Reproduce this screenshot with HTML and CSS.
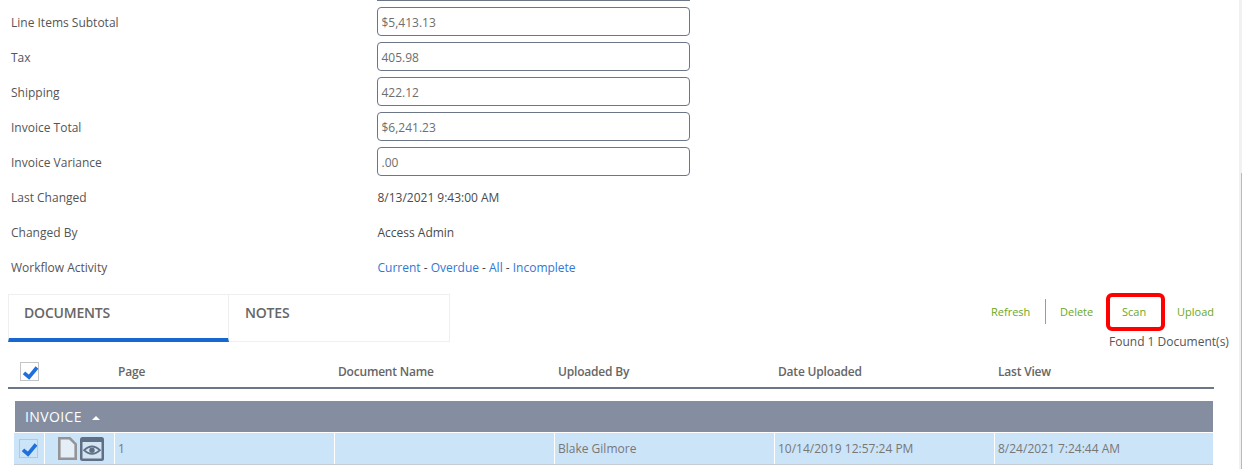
FILE: index.html
```html
<!DOCTYPE html>
<html lang="en">
<head>
<meta charset="utf-8">
<title>Invoice</title>
<link rel="stylesheet" href="styles.css">
</head>
<body>
<div class="page">
  <div class="clipped-field"></div>
  <div class="form">
    <div class="row"><span class="label">Line Items Subtotal</span><div class="input">$5,413.13</div></div>
    <div class="row"><span class="label">Tax</span><div class="input">405.98</div></div>
    <div class="row"><span class="label">Shipping</span><div class="input">422.12</div></div>
    <div class="row"><span class="label">Invoice Total</span><div class="input">$6,241.23</div></div>
    <div class="row"><span class="label">Invoice Variance</span><div class="input">.00</div></div>
    <div class="row"><span class="label">Last Changed</span><span class="value">8/13/2021 9:43:00 AM</span></div>
    <div class="row"><span class="label">Changed By</span><span class="value">Access Admin</span></div>
    <div class="row"><span class="label">Workflow Activity</span><span class="value"><a class="link">Current</a> - <a class="link">Overdue</a> - <a class="link">All</a> - <a class="link">Incomplete</a></span></div>
  </div>
  <div class="tabbar">
    <div class="tabs">
      <div class="tab tab-active">DOCUMENTS</div>
      <div class="tab tab-second">NOTES</div>
    </div>
    <div class="actions">
      <div class="action-row">
        <a class="action action-refresh">Refresh</a>
        <a class="action action-delete">Delete</a>
        <a class="action action-scan">Scan</a>
        <a class="action action-upload">Upload</a>
      </div>
      <div class="found">Found 1 Document(s)</div>
    </div>
  </div>
  <div class="thead">
    <div class="check-cell">
      <span class="check"><svg viewBox="0 0 18 18" width="18" height="18"><path d="M3 9.8 L8 14.2 L16 4.5" fill="none" stroke="#1f6fdc" stroke-width="3.6"/></svg></span>
    </div>
    <div class="th">Page</div>
    <div class="th">Document Name</div>
    <div class="th">Uploaded By</div>
    <div class="th">Date Uploaded</div>
    <div class="th">Last View</div>
  </div>
  <div class="group">INVOICE <span class="caret"></span></div>
  <div class="trow">
    <div class="td td-check">
      <span class="check"><svg viewBox="0 0 18 18" width="18" height="18"><path d="M3 9.8 L8 14.2 L16 4.5" fill="none" stroke="#1f6fdc" stroke-width="3.6"/></svg></span>
    </div>
    <div class="td td-icons">
      <svg class="icon-doc" viewBox="0 0 19 23" width="19" height="23"><path d="M1.3 1.3 H11.8 L17.7 7.2 V21.7 H1.3 Z" fill="#e3eef7" stroke="#949496" stroke-width="2.6"/></svg>
      <svg class="icon-view" viewBox="0 0 24 24" width="24" height="24"><rect x="0" y="0" width="24" height="24" rx="2.5" fill="#5f6f85"/><rect x="2.5" y="5" width="19" height="16.5" fill="#d3e4f2"/><path d="M4 13.2 Q12 5.5 20 13.2 Q12 20.8 4 13.2 Z" fill="none" stroke="#5f6f85" stroke-width="1.6"/><circle cx="12" cy="13.2" r="2.7" fill="#5f6f85"/></svg>
    </div>
    <div class="td td-wide">1</div>
    <div class="td td-wide"></div>
    <div class="td td-wide">Blake Gilmore</div>
    <div class="td td-wide">10/14/2019 12:57:24 PM</div>
    <div class="td td-last">8/24/2021 7:24:44 AM</div>
  </div>
</div>
<div class="scroll-track"><div class="scroll-thumb"></div></div>
</body>
</html>
```

FILE: styles.css
```css
*, *::after { box-sizing: border-box; }
html, body { margin: 0; height: 469px; overflow: hidden; background: #fff; }
body { font-family: "Open Sans", sans-serif; font-size: 12px; color: #555; }
.page { width: 1239px; padding-left: 8px; }
.clipped-field { margin-left: 369px; width: 313px; height: 1px; background: #6b7686; }
.form { padding-top: 4px; }
.row { display: flex; align-items: center; height: 35px; }
.label { width: 369px; padding-left: 3px; color: #555; }
.input { align-self: flex-start; margin-top: 2px; width: 313px; height: 29px; border: 1px solid #6b7686; border-radius: 4px; padding-left: 3.5px; line-height: 29px; color: #6e6e6e; }
.value { color: #4a4a4a; padding-left: 0.5px; letter-spacing: -0.01px; }
.link { color: #2f78d6; }
.tabbar { display: flex; justify-content: space-between; height: 62px; margin-top: 9px; }
.tabs { display: flex; height: 48px; }
.tab { width: 221px; height: 48px; border: 1px solid #efefef; padding: 8px 0 0 15px; font-size: 14px; font-weight: 600; letter-spacing: -0.2px; color: #666; line-height: 19px; }
.tab-second { border-left: 0; padding-left: 16px; }
.tab-active { border-bottom: 4px solid #1668d0; }
.actions { width: 260px; margin-right: 5px; }
.action-row { display: flex; height: 36px; font-size: 11px; line-height: 36px; }
.action { color: #6aa81c; display: block; }
.action-refresh { margin-left: 17px; width: 55px; height: 25px; margin-top: 5px; line-height: 25px; border-right: 1px solid #7fb65a; }
.action-delete { margin-left: 14px; width: 47px; }
.action-scan { margin-left: 15px; width: 55px; position: relative; }
.action-scan::after { content: ""; position: absolute; left: -16px; top: -1px; width: 59px; height: 38px; border: 4px solid #f00; border-radius: 6px; }
.found { margin-left: 135px; margin-top: 3px; line-height: 17px; color: #555; white-space: nowrap; }
.thead { display: flex; align-items: center; height: 33px; width: 1206px; border-bottom: 2px solid #6b7686; margin-bottom: 12px; }
.check-cell { flex: none; width: 110px; padding-left: 11.5px; display: flex; }
.check { display: block; width: 19px; height: 19px; border: 1px solid #c4c4c4; }
.check svg { display: block; overflow: visible; }
.th { flex: none; width: 220px; font-weight: 600; color: #666; letter-spacing: -0.2px; }
.group { margin-left: 7px; width: 1198px; height: 31px; background: #848ea0; color: #fff; font-size: 14px; letter-spacing: 0.4px; line-height: 31px; padding-left: 10px; }
.caret { display: inline-block; width: 0; height: 0; margin: 0 0 2px 6px; border-left: 4px solid transparent; border-right: 4px solid transparent; border-bottom: 4px solid #fff; }
.trow { display: flex; margin-top: 1px; margin-left: 6px; width: 1199px; height: 32px; background: #cce4f7; border-bottom: 1px solid #c8ccd2; color: #777; }
.td { flex: none; height: 31px; line-height: 31px; border-right: 1px solid #fff; padding-left: 3px; }
.td-check { width: 31px; padding-left: 5px; padding-top: 6px; }
.td-icons { width: 70px; display: flex; align-items: center; gap: 3px; padding-left: 13px; }
.icon-doc, .icon-view { display: block; flex: none; }
.td-wide { width: 220px; }
.td-last { flex: 1; border-right: 0; }
.scroll-track { position: fixed; right: 0; top: 0; bottom: 0; width: 3px; background: #f1f1f1; padding-top: 173px; }
.scroll-thumb { margin-left: 1.5px; height: 296px; background: #b9b9b9; }
```
